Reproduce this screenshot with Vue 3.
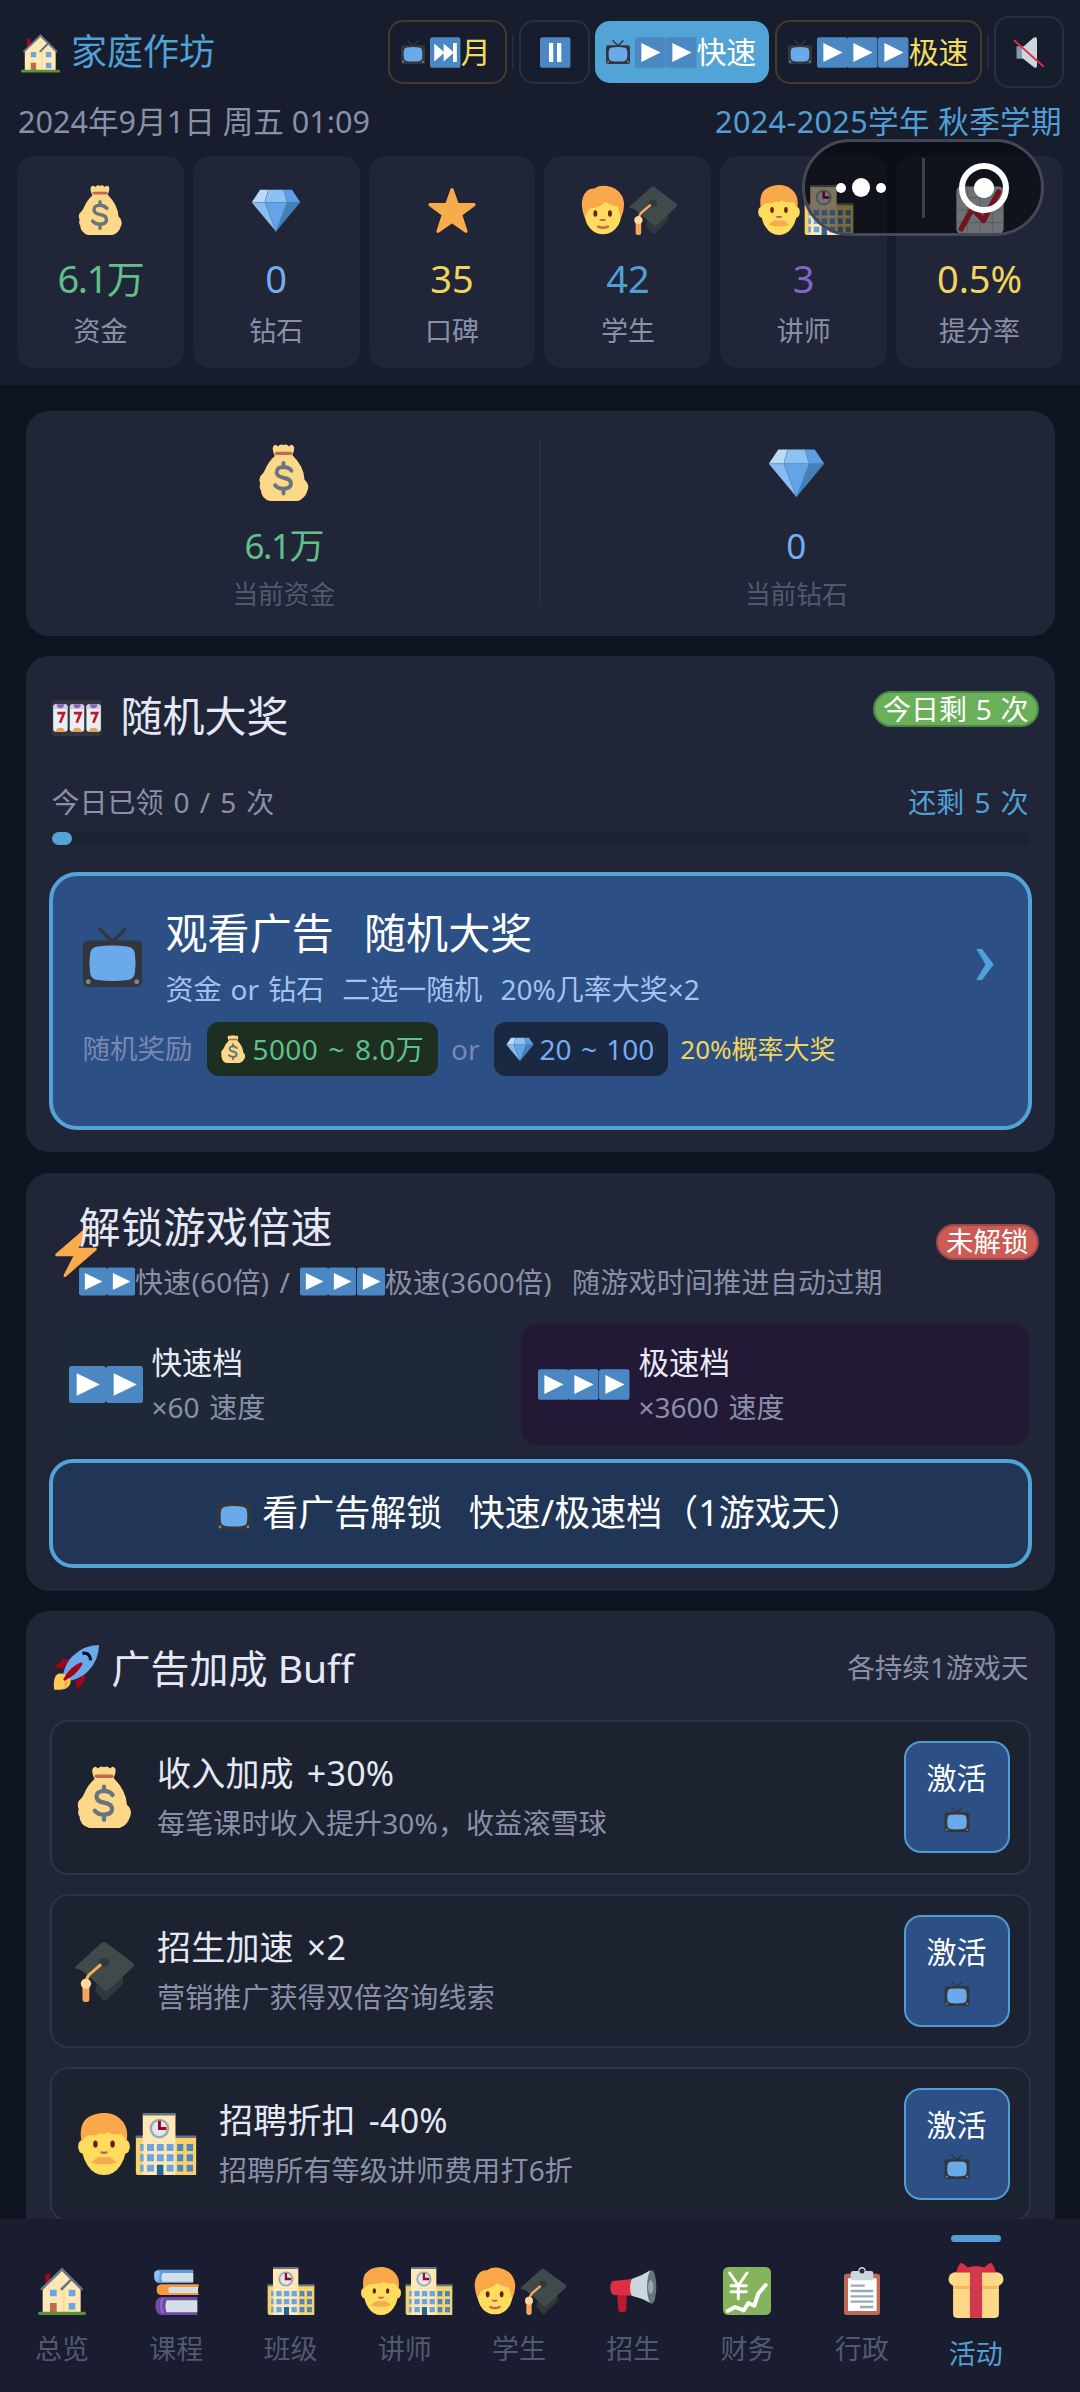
<script setup>
const stats = [
  { icons: ['bag'], value: '6.1万', label: '资金', tone: 'green tight' },
  { icons: ['gem'], value: '0', label: '钻石', tone: 'sky' },
  { icons: ['star'], value: '35', label: '口碑', tone: 'yellow' },
  { icons: ['boy', 'cap'], value: '42', label: '学生', tone: 'blue' },
  { icons: ['man', 'school'], value: '3', label: '讲师', tone: 'purple' },
  { icons: ['chart'], value: '0.5%', label: '提分率', tone: 'yellow' },
]
const buffs = [
  { icons: ['bag'], title: '收入加成 +30%', desc: '每笔课时收入提升30%，收益滚雪球' },
  { icons: ['cap'], title: '招生加速 ×2', desc: '营销推广获得双倍咨询线索' },
  { icons: ['man', 'school'], title: '招聘折扣 -40%', desc: '招聘所有等级讲师费用打6折' },
]
const tabs = [
  { icons: ['house'], label: '总览' },
  { icons: ['books'], label: '课程' },
  { icons: ['school'], label: '班级' },
  { icons: ['man', 'school'], label: '讲师' },
  { icons: ['boy', 'cap'], label: '学生' },
  { icons: ['horn'], label: '招生' },
  { icons: ['yen'], label: '财务' },
  { icons: ['clip'], label: '行政' },
  { icons: ['gift'], label: '活动', active: true },
]
</script>

<template>
  <div class="app">
    <svg class="sprite" aria-hidden="true">
      <symbol id="house" viewBox="0 0 36 36">
        <path fill="#a0041e" d="M5.500 5h3.600v7H5.500z" />
        <path fill="#ffe8b6" d="M3.500 16 18 2l14 14v18.500h-28.500z" />
        <path fill="#ffd983" opacity=".7" d="M18.500 16v18.500h1.500V14z" />
        <path fill="none" stroke="#66757f" stroke-width="1.900" stroke-linecap="round" d="M2.800 16.500 18 1.800l14.700 14.700M17.800 16.500l6.500-6.500" />
        <path fill="#6aa6e0" d="M9 17h5v5H9zm14 0h5v5h-5zm0 10h5v5h-5z" />
        <path fill="#c1694f" d="M9 27h5v7.500H9z" />
        <rect y="33.500" width="36" height="2.500" rx="1.250" fill="#5c913b" />
      </symbol>
      <symbol id="tv" viewBox="0 0 36 36">
        <path d="M18 8.500 10.500 1M18 8.500 25.500 1" stroke="#31373d" stroke-width="2" stroke-linecap="round" />
        <rect y="7.700" width="36" height="28.300" rx="3" fill="#31373d" />
        <path d="M9 11.300q9-1.300 18 0 4 .4 4.600 4 1 6.200 0 12.400-.6 3.600-4.600 4-9 1.200-18 0-4-.4-4.600-4-1-6.200 0-12.400.6-3.600 4.600-4z" fill="#6aaaea" />
        <circle cx="3.200" cy="32.800" r="1.500" fill="#7c8790" /><circle cx="32.800" cy="32.800" r="1.500" fill="#7c8790" />
      </symbol>
      <symbol id="play" viewBox="0 0 36 36">
        <rect width="36" height="36" rx="3" fill="#4b87c2" /><path fill="#fff" d="M7.500 7v22L30 18z" />
      </symbol>
      <symbol id="pause" viewBox="0 0 36 36">
        <rect width="36" height="36" rx="3" fill="#4b87c2" /><path fill="#fff" d="M10.500 7h5v22h-5zm9.500 0h5v22h-5z" />
      </symbol>
      <symbol id="next" viewBox="0 0 36 36">
        <rect width="36" height="36" rx="3" fill="#4b87c2" /><path fill="#fff" d="M5 7.500v21L16 19v9.500L27 19v10h4.500V7H27v10L16 7.500V17z" />
      </symbol>
      <symbol id="mute" viewBox="0 0 36 36">
        <path fill="#8899a6" d="M4 11h9v14H4z" />
        <path fill="#ccd6dd" d="M10 13 23 1.500Q27-.5 27 3v30q0 3-3 2L10 24z" />
        <path stroke="#dd2e44" stroke-width="2" stroke-linecap="round" d="M1.500 4.500 34 33.500" />
      </symbol>
      <symbol id="bag" viewBox="0 0 36 36">
        <path fill="#fdd888" d="M11.500 1.500q1.300-2 3 0 1.700-2 3.500-.8 1.800-1.200 3.500.8 1.700-2 3 0 .8 1.500-.9 5.500Q31 14.500 31.300 22.500q3.700 3.200 1.600 7.500Q31.500 34.500 27 36H9.500Q4 34.500 3.700 29 2.500 28 3.300 25 1.800 21 4.600 19 6 17.500 6.500 16q2-5 6-8.500-2-4-1-6z" />
        <rect x="12.500" y="4.900" width="11" height="2" rx="1" fill="#bf6952" />
        <path fill="none" stroke="#67757f" stroke-width="2.500" stroke-linecap="round" d="M23 16.800q-1.800-2.300-5-2.300-4.500.2-4.300 3.500.2 2.600 4.300 3.300 4.800.8 4.700 3.900-.4 3-4.700 3-3.500 0-5.300-2.200M18 12v2.500M18 28.500v2.700" />
      </symbol>
      <symbol id="gem" viewBox="0 0 36 36">
        <path fill="#bddaf5" d="M6.500 3.500h6L10 12.500H.5z" /><path fill="#8cc1f0" d="M12.500 3.500h11L26 12.500H10z" />
        <path fill="#5d9fe6" d="M23.500 3.500h6l6 9H26z" /><path fill="#8bbcf0" d="M.5 12.500H10l8 21z" />
        <path fill="#64a3e5" d="M10 12.500h16l-8 21z" /><path fill="#457fb9" d="M26 12.500h9.500L18 33.500z" />
        <path fill="none" stroke="#5390cc" stroke-width=".4" d="M.5 12.500h35M12.500 3.500 10 12.500l8 21 8-21-2.500-9" />
      </symbol>
      <symbol id="star" viewBox="0 0 36 36">
        <path fill="#f7ac4b" stroke="#f7ac4b" stroke-width="2.400" stroke-linejoin="round" d="m18 3.400 3.700 10.500 12.100.3-9.700 7.100 3.900 12L18 26.200 8 33.300l3.900-12-9.700-7.100 12.100-.3z" />
      </symbol>
      <symbol id="boy" viewBox="0 0 36 36">
        <path fill="#ffdc5d" d="M4.500 16Q3 7 18 7t13.500 9q.3 8-2.500 13-4 6.500-11 6.500T7 29q-2.800-5-2.500-13z" />
        <path fill="#f9a94a" d="M5 24Q1.500 15 3.500 9 6 2 12 2.500 16-1 24 1.500q7.500 2.500 9 10.500.8 6-2.300 12-.7-5-2.200-8.500-6-1-8.500-3.500-4 4-11 5Q6 19 5 24z" />
        <ellipse cx="12.500" cy="20.500" rx="1.400" ry="2.300" fill="#662113" /><ellipse cx="23" cy="20.500" rx="1.400" ry="2.300" fill="#662113" />
        <path fill="#c1694f" d="M15.500 24.500h4.500q0 1.600-2.200 1.600t-2.300-1.600z" /><path fill="none" stroke="#c1694f" stroke-width="1.800" stroke-linecap="round" d="M14.500 30q3.500 1.700 7 0" />
      </symbol>
      <symbol id="man" viewBox="0 0 36 36">
        <ellipse cx="5.500" cy="19.500" rx="2.500" ry="4" fill="#ffdc5d" /><ellipse cx="30.500" cy="19.500" rx="2.500" ry="4" fill="#ffdc5d" />
        <path fill="#ffdc5d" d="M5 15q0-8 13-8t13 8q.5 10-3.500 15.500Q24 36 18 36T8.500 30.500Q4.500 25 5 15z" />
        <path fill="#f9a94a" d="M5 17Q2.500 4 12 1q9-2.800 15 2 6 5 4 14-.6-3-3-4.800-5 .8-8.500-1.200-1 2-3.500.8Q13 13.500 9 13q-3 1-4 4z" />
        <ellipse cx="13" cy="18" rx="1.300" ry="2.100" fill="#662113" /><ellipse cx="23" cy="18" rx="1.300" ry="2.100" fill="#662113" />
        <path fill="#c1694f" d="M15.800 22.300h4.400q0 1.500-2.200 1.500t-2.200-1.500z" />
        <path fill="#f7ac4b" d="M18 26q2.500-1.300 5 .5 1.500 1.400 2.500 2-2.500 1.700-7.500 1.200-5 .5-7.500-1.200 1-.6 2.500-2 2.500-1.800 5-.5z" />
      </symbol>
      <symbol id="cap" viewBox="0 0 36 36">
        <path fill="#30383b" d="M14 24 28 20q2.500 4 0 6.500L19.500 35q-1.200.8-2.300-.5L13 30z" />
        <path fill="#414a4b" d="M1.300 15.500 16.500 1.800q1.500-1 3 0L35 13.500q1 1 0 2L19.500 30 5 17.500q-5-1-3.700-2z" />
        <ellipse cx="18" cy="13" rx="3" ry="2.600" fill="#30383b" />
        <path fill="none" stroke="#fcab56" stroke-width="1.700" stroke-linecap="round" d="M15.800 14.600 9.500 20q-1.800 2-2 5" />
        <rect x="5.500" y="25" width="4" height="11" rx="1.600" fill="#f5a75d" /><circle cx="7.500" cy="25.300" r="3" fill="#ffd99b" />
      </symbol>
      <symbol id="school" viewBox="0 0 36 36">
        <path fill="#f7d16a" d="M.5 13.500h35V36H2q-1.500 0-1.500-1.500z" /><path fill="#66757f" d="M22 13h13.500v1.500H22zM.5 13H5v1.500H.5z" />
        <path fill="#ffe8b6" d="M4.500.5h19V36h-19z" /><path fill="#66757f" d="M4.500 0h19v1.500h-19z" />
        <g fill="#6aa6e0"><path d="M3 18h2v4H3zm4 0h4v4H7zm5.700 0h4v4h-4zm5.700 0h4v4h-4zM3 24h2v4H3zm4 0h4v4H7zm5.700 0h4v4h-4zm5.700 0h4v4h-4zM3 30h2v4H3zm4 0h4v4H7zm11.400 0h4v4h-4z" /></g>
        <path fill="#4b87c2" d="M24.500 18h3.500v4h-3.500zm5.500 0h3.700v4H30zm-5.500 6h3.500v4h-3.500zm5.500 0h3.700v4H30zm-5.500 6h3.500v4h-3.500zm5.500 0h3.700v4H30z" />
        <path fill="#226699" d="M12.700 30h3.800v6h-3.800z" /><circle cx="14.200" cy="9" r="5" fill="#e1e8ed" stroke="#99aab5" stroke-width="1.400" />
        <path stroke="#a0041e" stroke-width="1.700" fill="none" d="M14.200 4.500V9h4" />
      </symbol>
      <symbol id="chart" viewBox="0 0 36 36">
        <rect x="1" y="1" width="34" height="34" rx="3.500" fill="#dde5ea" />
        <path stroke="#b9c7d1" stroke-width="1" d="M9 1v34M18 1v34M27 1v34M1 9h34M1 18h34M1 27h34" />
        <path fill="none" stroke="#dd2e44" stroke-width="4" stroke-linecap="round" stroke-linejoin="round" d="M4.500 31.500 12.500 17l8 8.500L31.500 5" />
      </symbol>
      <symbol id="slots" viewBox="0 0 36 26">
        <rect width="36" height="26" rx="2.500" fill="#31373d" />
        <g v-for="x in [0.8, 12.8, 24.800]" :key="x" :transform="`translate(${x} 3)`">
          <rect width="10.400" height="20" rx="2" fill="#e8eff3" /><path d="M0 3.500V2Q.2 0 2 0h6.400q2 0 2 2v1.500z" fill="#d7c7ec" />
          <path d="M2.500 0h5.500q-.3 3-2.800 3T2.500 0z" fill="#8767ac" /><path d="M2 20q0-3 3.200-3t3.200 3z" fill="#e6a258" />
          <path d="M3 6.500h4.800L5 13.500" stroke="#be1931" stroke-width="1.900" fill="none" />
        </g>
      </symbol>
      <symbol id="bolt" viewBox="0 0 36 36">
        <path fill="#fbaa4c" d="M32.938 15.651C32.792 15.260 32.418 15 32 15H19.925L26.890 1.458c.219-.426.106-.947-.271-1.243C26.437.071 26.218 0 26 0c-.233 0-.466.082-.653.243L18 6.588 3.347 19.243c-.316.273-.430.714-.284 1.105S3.582 21 4 21h12.075L9.110 34.542c-.219.426-.106.947.271 1.243.182.144.401.215.619.215.233 0 .466-.082.653-.243L18 29.412l14.653-12.655c.317-.273.430-.714.285-1.106z" />
      </symbol>
      <symbol id="rocket" viewBox="0 0 36 36">
        <path fill="#a0041e" d="M1 17.500 8 11h5L8 18.500zM18.500 35l6.500-7v-5l-7.500 5z" />
        <path fill="#6aaaea" d="M36 0Q24 0 15 9q-5 5-7 13.500L13.500 28Q22 26 27 21 36 12 36 0z" />
        <path fill="#fdcb58" d="M1 35Q-.5 25 4 22.500q5-1 8.500 2.500 3 5-1.500 8.500Q8 35.500 1 35z" /><path fill="#f7ac4b" d="M7 25q4 0 4.500 4T8 34q3-4-1-9z" />
        <path fill="#a0041e" d="M8 27Q13 17 22 13.500q1.500 0 1 1.500-4 8-14 13z" />
        <path fill="none" stroke="#0b1220" stroke-width="2.500" d="M23 6.500q6-1 6.500 5.500" />
      </symbol>
      <symbol id="books" viewBox="0 0 36 36">
        <path fill="#5c9de0" d="M5 2h26v1.500q-1.500 4 0 8V12H5q-3.500 0-3.500-5T5 2z" /><path fill="#d4dfe8" d="M8 4.500h23v6.500H8q-2-3 0-6.500z" /><path fill="#8cc1f0" d="M2 3.500Q4 2 6 3.500L5 11Q1 11 2 3.500z" />
        <path fill="#f59b3c" d="M6.500 13H35v1.500q-1 3 0 6.500H6.500q-3-.5-3-4t3-4z" /><path fill="#d4dfe8" d="M13 15h21.500v4.500H13q-1.500-2 0-4.500z" />
        <path fill="#6f4aa4" d="M7 22.500h27V36H7q-4.500-1-4.500-7T7 22.500z" /><path fill="#d4dfe8" d="M11 25h23v9H11q-2-4.500 0-9z" /><path fill="#9266cc" d="M9 23.500q-3 5 0 11h-2q-2-6 0-11z" />
      </symbol>
      <symbol id="horn" viewBox="0 0 36 36">
        <path fill="#be1931" d="M6 18h7.500l-.5 14q-.5 2-3 2t-3-2z" /><path fill="#dd2e44" d="M3 10.500 17 9v12.500L4 21q-3-1-3-5.500t2-5z" />
        <path fill="#ccd6dd" d="M17 9Q24 7 31 2.500V27q-7-4-14-5.500-2.500-6 0-12.500z" /><ellipse cx="32" cy="15" rx="3.500" ry="12.500" fill="#66757f" /><ellipse cx="31.300" cy="15" rx="2" ry="5" fill="#99aab5" />
      </symbol>
      <symbol id="yen" viewBox="0 0 36 36">
        <rect width="36" height="36" rx="4" fill="#85b45c" />
        <g fill="none" stroke="#fff" stroke-linecap="round"><path stroke-width="2.200" d="m5 4.500 6.500 9.500L18 4.500M11.500 14v10M6 14h11.500M6 18.500h11.500" /><path stroke-width="3" stroke-linejoin="round" d="m3.500 33 5.500-3 6.500 2.500 3.500-5.500 4.500 2L26.500 20l5.500-6.500" /></g>
      </symbol>
      <symbol id="clip" viewBox="0 0 36 36">
        <rect x="4.500" y="5" width="27" height="31" rx="2" fill="#bf6952" /><path fill="#fff" d="M7.500 8.500h21.500V33H7.500z" />
        <path fill="#ccd6dd" d="M9.500 4.500q0-1.500 2-1.500H15q.5-3 3-3t3 3h3.500q2 0 2 1.500V10h-17z" /><circle cx="18" cy="3" r="1.900" fill="#292f33" />
        <path stroke="#99aab5" stroke-width="1.700" d="M9.500 14H20M9.500 18h17M9.500 22h17M9.500 26h17M16.500 30h10" />
      </symbol>
      <symbol id="gift" viewBox="0 0 36 36">
        <path fill="#fdd888" d="M3 13h30v20q0 3-3 3H6q-3 0-3-3z" /><path fill="#f4ba5b" d="M3 15h30v2H3z" />
        <rect y="6" width="36" height="9" rx="4.500" fill="#fdd888" />
        <path fill="#dd2e44" d="M5 6q1-4 3-6 2 0 4.500 3Q18 1 23.500 3 26 0 28 0q2 2 3 6z" /><path fill="#d13a4c" d="M14 3.500q4-1.500 8 0V36h-8z" />
      </symbol>
    </svg>

    <header class="header">
      <div class="topbar">
        <svg class="house"><use href="#house" /></svg>
        <span class="brand">家庭作坊</span>
        <div class="speeds">
          <div class="speed gold month"><svg class="tv"><use href="#tv" /></svg><svg class="key"><use href="#next" /></svg>月</div>
          <i class="sep" />
          <div class="speed pause"><svg class="key"><use href="#pause" /></svg></div>
          <div class="speed on"><svg class="tv"><use href="#tv" /></svg><svg v-for="n in 2" :key="n" class="key"><use href="#play" /></svg>快速</div>
          <div class="speed gold"><svg class="tv"><use href="#tv" /></svg><svg v-for="n in 3" :key="n" class="key"><use href="#play" /></svg>极速</div>
          <i class="sep" />
          <div class="speed mute"><svg><use href="#mute" /></svg></div>
        </div>
      </div>
      <div class="dates"><span>2024年9月1日 周五 01:09</span><span class="blue term">2024-2025学年 秋季学期</span></div>
      <div class="stats">
        <div v-for="s in stats" :key="s.label" class="stat">
          <div class="emojis"><svg v-for="i in s.icons" :key="i"><use :href="'#' + i" /></svg></div>
          <b :class="s.tone">{{ s.value }}</b>
          <span>{{ s.label }}</span>
        </div>
      </div>
      <div class="capsule">
        <i class="dot" /><i class="dot big" /><i class="dot" /><i class="bar" /><i class="ring" />
      </div>
    </header>

    <main class="main">
      <section class="card wallet">
        <div class="purse"><svg><use href="#bag" /></svg><b class="green tight">6.1万</b><span>当前资金</span></div>
        <i />
        <div class="purse"><svg><use href="#gem" /></svg><b class="sky">0</b><span>当前钻石</span></div>
      </section>

      <section class="card prize">
        <div class="prize-head">
          <svg><use href="#slots" /></svg><h2>随机大奖</h2><span class="badge ok">今日剩 5 次</span>
        </div>
        <div class="quota"><span>今日已领 0 / 5 次</span><span class="blue">还剩 5 次</span></div>
        <div class="track"><i /></div>
        <div class="watch">
          <div class="watch-top">
            <svg class="watch-tv"><use href="#tv" /></svg>
            <div class="watch-text"><h3>观看广告&nbsp; 随机大奖</h3><p>资金 or 钻石&nbsp; 二选一随机&nbsp; 20%几率大奖×2</p></div>
            <svg class="chev" viewBox="0 0 20 32"><path d="M1 0h6l12 16L7 32H1l9.500-16z" fill="#4fa0d8" /></svg>
          </div>
          <div class="rewards">
            <span class="r-label">随机奖励</span>
            <span class="chip green"><svg><use href="#bag" /></svg>5000 ~ 8.0万</span>
            <span class="or">or</span>
            <span class="chip navy sky"><svg><use href="#gem" /></svg>20 ~ 100</span>
            <span class="odds yellow">20%概率大奖</span>
          </div>
        </div>
      </section>

      <section class="card unlock">
        <div class="unlock-head">
          <svg class="bolt"><use href="#bolt" /></svg>
          <div class="unlock-text">
            <h2>解锁游戏倍速</h2>
            <p><svg v-for="n in 2" :key="n"><use href="#play" /></svg><span>快速(60倍) /&nbsp;</span><svg v-for="n in 3" :key="n"><use href="#play" /></svg><span>极速(3600倍)&nbsp; 随游戏时间推进自动过期</span></p>
          </div>
          <span class="badge no">未解锁</span>
        </div>
        <div class="gears">
          <div class="gear fast"><svg v-for="n in 2" :key="n"><use href="#play" /></svg><div><b>快速档</b><span>×60 速度</span></div></div>
          <div class="gear ultra"><svg v-for="n in 3" :key="n"><use href="#play" /></svg><div><b>极速档</b><span>×3600 速度</span></div></div>
        </div>
        <div class="cta"><svg><use href="#tv" /></svg><span>看广告解锁&nbsp; 快速/极速档（1游戏天）</span></div>
      </section>

      <section class="card buffs">
        <div class="buffs-head"><svg><use href="#rocket" /></svg><h2>广告加成 Buff</h2><span>各持续1游戏天</span></div>
        <div v-for="b in buffs" :key="b.title" class="buff">
          <div class="buff-icons"><svg v-for="i in b.icons" :key="i"><use :href="'#' + i" /></svg></div>
          <div class="buff-text"><b>{{ b.title }}</b><span>{{ b.desc }}</span></div>
          <div class="activate"><span>激活</span><svg><use href="#tv" /></svg></div>
        </div>
      </section>
    </main>

    <nav class="tabs">
      <div v-for="t in tabs" :key="t.label" class="tab" :class="{ active: t.active }">
        <i />
        <div class="tab-icons"><svg v-for="i in t.icons" :key="i"><use :href="'#' + i" /></svg></div>
        <span>{{ t.label }}</span>
      </div>
    </nav>
  </div>
</template>

<style>
body { margin: 0; background: #0f1520; }
</style>

<style scoped>
* { box-sizing: border-box; margin: 0; padding: 0; }
.app { width: 1080px; height: 2392px; display: flex; flex-direction: column; overflow: hidden; background: #0f1520; color: #8990a8; font: 400 28px/1 "Noto Sans", "Noto Sans CJK SC", sans-serif; white-space: pre; }
h2, h3, b { font-weight: 400; }
svg { display: block; flex: none; overflow: visible; }
i { display: block; flex: none; }
.sprite { position: absolute; width: 0; height: 0; }
.green { color: #63bf8a; } .sky { color: #74acf2; } .yellow { color: #f0d55c; } .blue { color: #519fd5; } .purple { color: #8064ca; }
.tight { letter-spacing: -1.500px; }

.header { position: relative; flex: none; height: 385px; background: #181d2e; padding: 0 16px 0 17px; }
.topbar { height: 104px; display: flex; align-items: center; }
.house { width: 39px; height: 42px; margin: 2px 0 0 4px; }
.brand { margin: -1px 0 0 11px; font-size: 36px; color: #51a0d6; }
.speeds { margin-left: auto; display: flex; align-items: center; gap: 5.200px; }
.speed { height: 64px; border: 2px solid #292f42; border-radius: 15px; display: flex; align-items: center; font-size: 30px; color: #fff; padding: 0 11px; }
.speed.gold { border-color: #463a29; color: #f3dc62; }
.speed.month { padding: 0 14px 0 11px; }
.speed.on { border-color: #52a3d6; background: #52a3d6; padding: 0 11px 0 9px; height: 62px; }
.speed.pause { padding: 0 17px 0 19px; }
.speed.mute { width: 70px; height: 72px; padding: 0; justify-content: center; }
.mute svg { width: 32px; height: 37px; }
.sep { width: 2px; height: 34px; background: #252b3d; }
.tv { width: 24px; height: 24px; margin-right: 5px; }
.key { width: 30.700px; height: 31px; }
.dates { height: 36px; margin-top: -1px; padding: 0 2px 0 1px; display: flex; justify-content: space-between; align-items: center; font-size: 30.600px; }
.term { letter-spacing: .35px; }
.stats { margin: 17px 1px 0 0; display: flex; gap: 9px; }
.stat { flex: 1; height: 212px; padding-top: 29px; border-radius: 17px; background: #202637; display: flex; flex-direction: column; align-items: center; }
.emojis { display: flex; height: 50px; }
.emojis svg { width: 50px; height: 50px; }
.stat b { height: 40px; line-height: 40px; margin-top: 22.500px; font-size: 38px; }
.stat span { height: 28px; line-height: 28px; margin-top: 19.500px; font-size: 27px; }
.capsule { position: absolute; left: 802px; top: 139px; width: 242px; height: 97px; border-radius: 49px; border: 3px solid #444856; background: rgba(0, 0, 0, .5); display: flex; align-items: center; padding-left: 31px; }
.dot { width: 10px; height: 10px; border-radius: 50%; background: #fff; }
.dot.big { width: 18px; height: 19px; margin: 0 6px; }
.bar { width: 3px; height: 60px; margin-left: 36px; background: #3d404a; }
.ring { width: 50px; height: 50px; margin-left: 34px; border: 6px solid #fff; border-radius: 50%; background: radial-gradient(circle, #fff 9.500px, transparent 10.500px); }

.main { flex: 1; min-height: 0; overflow: hidden; padding: 25.500px 25.500px 0; display: flex; flex-direction: column; gap: 20.500px; }
.card { flex: none; border-radius: 23px; background: #202637; }
.wallet { height: 225px; display: flex; padding: 30px 3px 0; }
.wallet > i { width: 2px; height: 165px; background: #282f41; }
.purse { flex: 1; display: flex; flex-direction: column; align-items: center; padding-top: 3px; }
.purse svg { width: 57px; height: 57px; }
.purse b { height: 40px; line-height: 40px; margin-top: 25px; font-size: 35px; }
.purse span { height: 28px; line-height: 28px; margin-top: 15px; font-size: 25.700px; color: #51596c; }

.prize { height: 496px; padding: 0 23px; }
.prize-head { height: 123px; display: flex; align-items: center; padding-left: 3px; }
.prize-head svg { width: 50px; height: 36px; }
h2 { font-size: 42px; color: #e5e8f5; }
.prize-head h2 { margin: -4px 0 0 19px; }
.badge { height: 36px; border-radius: 18px; border: 2px solid; display: flex; align-items: center; padding: 0 8px; color: #fff; font-size: 28px; margin-left: auto; word-spacing: 1.500px; }
.badge.ok { background: #69b058; border-color: #4b8648; margin-right: -7px; margin-top: -18px; }
.badge.no { background: #cc5b55; border-color: #96484a; margin-right: -7px; font-size: 27.500px; }
.quota { height: 46px; display: flex; justify-content: space-between; align-items: center; padding: 0 3px; word-spacing: 2.800px; }
.track { height: 13px; margin: 7px 3px 0; background: #1c2330; border-radius: 6px; }
.track i { width: 20px; height: 13px; border-radius: 6.500px; background: #52a3d6; }
.watch { margin-top: 26.500px; height: 258px; border: 4px solid #52a3d6; border-radius: 28px; background: #2c4f86; padding: 31px 30px 0; }
.watch-top { display: flex; height: 109px; }
.watch-tv { width: 59px; height: 59px; margin-top: 21px; }
.watch-text { margin-left: 24px; }
.watch h3 { font-size: 42px; height: 52px; line-height: 52px; color: #fff; word-spacing: 4px; letter-spacing: .1px; }
.watch p { height: 32px; line-height: 32px; margin-top: 14px; color: #a5c2ee; word-spacing: 1.800px; }
.chev { width: 20px; height: 31px; margin: 42px 3px 0 auto; }
.rewards { display: flex; align-items: center; margin-top: 6px; height: 54px; }
.r-label, .or { color: #7988b0; }
.r-label { font-size: 27.500px; }
.chip { height: 54px; display: flex; align-items: center; border-radius: 12px; background: #1c2f20; margin-left: 14px; padding: 0 14px 0 12px; word-spacing: 2.500px; letter-spacing: .4px; }
.chip svg { width: 28px; height: 28px; margin-right: 6px; }
.chip.navy { background: #1a2841; letter-spacing: 0; word-spacing: 2px; }
.or { margin-left: 13px; }
.odds { margin-left: 12px; font-size: 26px; }

.unlock { height: 418px; padding: 0 23px; }
.unlock-head { height: 151px; display: flex; align-items: flex-start; padding-left: 2px; }
.bolt { width: 50px; height: 50px; margin-top: 54px; }
.unlock-text { margin-left: -22px; padding-top: 30px; position: relative; }
.unlock-text h2 { height: 48px; line-height: 48px; letter-spacing: .4px; }
.unlock-text p { height: 32px; margin-top: 15px; display: flex; align-items: center; word-spacing: 2.500px; letter-spacing: .25px; }
.unlock-text p svg { width: 28.200px; height: 29px; }
.badge.no { margin-top: 51px; }
.gears { display: flex; height: 121px; gap: 12px; margin: 0 3px; }
.gear { border-radius: 16px; display: flex; align-items: center; padding-left: 17px; }
.gear div { margin-left: 9px; word-spacing: 2.500px; }
.gear b, .gear span { display: block; height: 32px; line-height: 32px; }
.gear b { font-size: 30.500px; color: #e8ebf6; }
.gear span { margin-top: 13px; }
.fast { width: 457px; background: #1f2836; }
.fast svg { width: 37px; height: 37px; }
.ultra { flex: 1; background: #231936; }
.ultra svg { width: 30.700px; height: 31px; }
.cta { margin-top: 14px; height: 109px; border: 4px solid #52a3d6; border-radius: 24px; background: #213656; display: flex; align-items: center; justify-content: center; color: #fff; font-size: 36px; word-spacing: 4px; }
.cta svg { width: 34px; height: 34px; margin-right: 11px; }

.buffs { height: 680px; padding: 0 24px; display: flex; flex-direction: column; gap: 19px; }
.buffs-head { height: 91px; padding: 22px 2px 0 3px; display: flex; align-items: center; margin-bottom: -1px; }
.buffs-head svg { width: 46px; height: 46px; }
.buffs-head h2 { font-size: 39px; margin-left: 13px; }
.buffs-head span { margin-left: auto; font-size: 27.600px; }
.buff { flex: none; height: 154.500px; border: 2px solid #2c3346; border-radius: 18px; background: #1c222f; display: flex; align-items: center; padding: 0 19px 0 21.500px; }
.buff-icons { display: flex; }
.buff-icons svg { width: 62px; height: 62px; }
.buff-text { margin-left: 22px; }
.buff-text b, .buff-text span { display: block; }
.buff-text b { height: 40px; line-height: 40px; font-size: 34px; color: #e5e8f5; word-spacing: 4px; letter-spacing: .2px; }
.buff-text span { height: 32px; line-height: 32px; margin-top: 14px; margin-bottom: 2px; letter-spacing: .15px; }
.activate { margin-left: auto; width: 106px; height: 112px; border: 2px solid #509bd0; border-radius: 17px; background: #2c4f86; display: flex; flex-direction: column; align-items: center; padding-top: 19px; color: #fff; font-size: 30px; }
.activate span { height: 32px; line-height: 32px; }
.activate svg { width: 26px; height: 25px; margin-top: 13px; }

.tabs { flex: none; height: 173px; background: #191d2f; display: flex; padding: 0 47px 0 5px; }
.tab { flex: 1 1 0; min-width: 0; display: flex; flex-direction: column; align-items: center; color: #525a70; font-size: 27px; }
.tab i { width: 50px; height: 7px; border-radius: 4px; margin-top: 16px; }
.tab-icons { display: flex; margin-top: 25px; }
.tab-icons svg { width: 48px; height: 48px; }
.tab span { height: 28px; line-height: 28px; margin-top: 20px; }
.active { color: #519fd5; }
.active i { background: #519fd5; }
.active .tab-icons { margin-top: 21px; }
.active .tab-icons svg { width: 56px; height: 55px; }
.active span { margin-top: 22px; }
</style>
